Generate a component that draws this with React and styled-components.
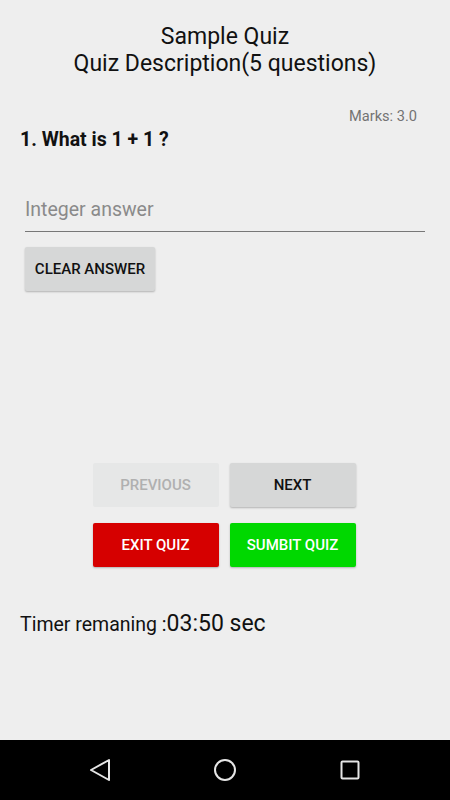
import React from 'react'
import styled, { createGlobalStyle } from 'styled-components'

const GlobalStyle = createGlobalStyle`
  html, body {
    margin: 0;
    padding: 0;
    background: #eeeeee;
  }
  body {
    font-family: Roboto, "Noto Sans", sans-serif;
  }
`

const Screen = styled.div`
  width: 450px;
  height: 800px;
  display: flex;
  flex-direction: column;
  background: #eeeeee;
`

const Content = styled.div`
  flex: 1;
  display: flex;
  flex-direction: column;
  padding: 0 20px;
`

const Header = styled.div`
  text-align: center;
  font-size: 23px;
  line-height: 27px;
  color: #111;
  padding-top: 23px;
`

const Marks = styled.div`
  align-self: flex-end;
  margin-top: 30px;
  margin-right: 13px;
  font-size: 14.6px;
  color: #737373;
`

const Question = styled.div`
  margin-top: 3px;
  font-size: 19.5px;
  font-weight: 700;
  color: #111;
`

const AnswerInput = styled.input`
  margin: 47px 5px 0;
  padding: 0 0 10px;
  border: none;
  border-bottom: 1px solid #777;
  background: transparent;
  font-family: inherit;
  font-size: 19.5px;
  color: #222;
  outline: none;

  &::placeholder {
    color: #8a8a8a;
  }
`

const Button = styled.button`
  width: ${p => p.$width || 126}px;
  height: 44px;
  border: none;
  border-radius: 2px;
  font-family: inherit;
  font-size: 15px;
  font-weight: 500;
  text-transform: uppercase;
  background: ${p => p.$bg || '#d6d7d7'};
  color: ${p => p.$color || '#111'};
  box-shadow: ${p => (p.disabled ? 'none' : '0 1px 2px rgba(0,0,0,0.25)')};
  cursor: pointer;
`

const ClearRow = styled.div`
  margin: 15px 5px 0;
`

const ButtonGrid = styled.div`
  margin-top: 172px;
  display: grid;
  grid-template-columns: 126px 126px;
  justify-content: center;
  column-gap: 11px;
  row-gap: 16px;
  margin-left: -21px;
  margin-right: -19px;
`

const Timer = styled.div`
  margin-top: 43px;
  font-size: 19.5px;
  color: #111;
  display: flex;
  align-items: baseline;
`

const TimerValue = styled.span`
  font-size: 23px;
`

const NavBar = styled.div`
  height: 60px;
  background: #000;
  display: flex;
  align-items: center;
  justify-content: center;
  gap: 101px;
`

const NavIcon = styled.svg`
  width: 24px;
  height: 24px;
  fill: none;
  stroke: #e6e6e6;
  stroke-width: 2;
`

export default function App() {
  return (
    <>
      <GlobalStyle />
      <Screen>
        <Content>
          <Header>
            <div>Sample Quiz</div>
            <div>Quiz Description(5 questions)</div>
          </Header>
          <Marks>Marks: 3.0</Marks>
          <Question>1. What is 1 + 1 ?</Question>
          <AnswerInput placeholder="Integer answer" />
          <ClearRow>
            <Button $width={130}>Clear Answer</Button>
          </ClearRow>
          <ButtonGrid>
            <Button disabled $bg="#e6e7e7" $color="#b0b0b0">Previous</Button>
            <Button>Next</Button>
            <Button $bg="#d60000" $color="#fff">Exit Quiz</Button>
            <Button $bg="#00d800" $color="#fff">Sumbit Quiz</Button>
          </ButtonGrid>
          <Timer>
            Timer remaning :<TimerValue>03:50 sec</TimerValue>
          </Timer>
        </Content>
        <NavBar>
          <NavIcon viewBox="0 0 24 24">
            <path d="M21 2 L3 12 L21 22 Z" strokeLinejoin="round" />
          </NavIcon>
          <NavIcon viewBox="0 0 24 24">
            <circle cx="12" cy="12" r="10" />
          </NavIcon>
          <NavIcon viewBox="0 0 24 24">
            <rect x="3.5" y="3.5" width="17" height="17" rx="1" />
          </NavIcon>
        </NavBar>
      </Screen>
    </>
  )
}
